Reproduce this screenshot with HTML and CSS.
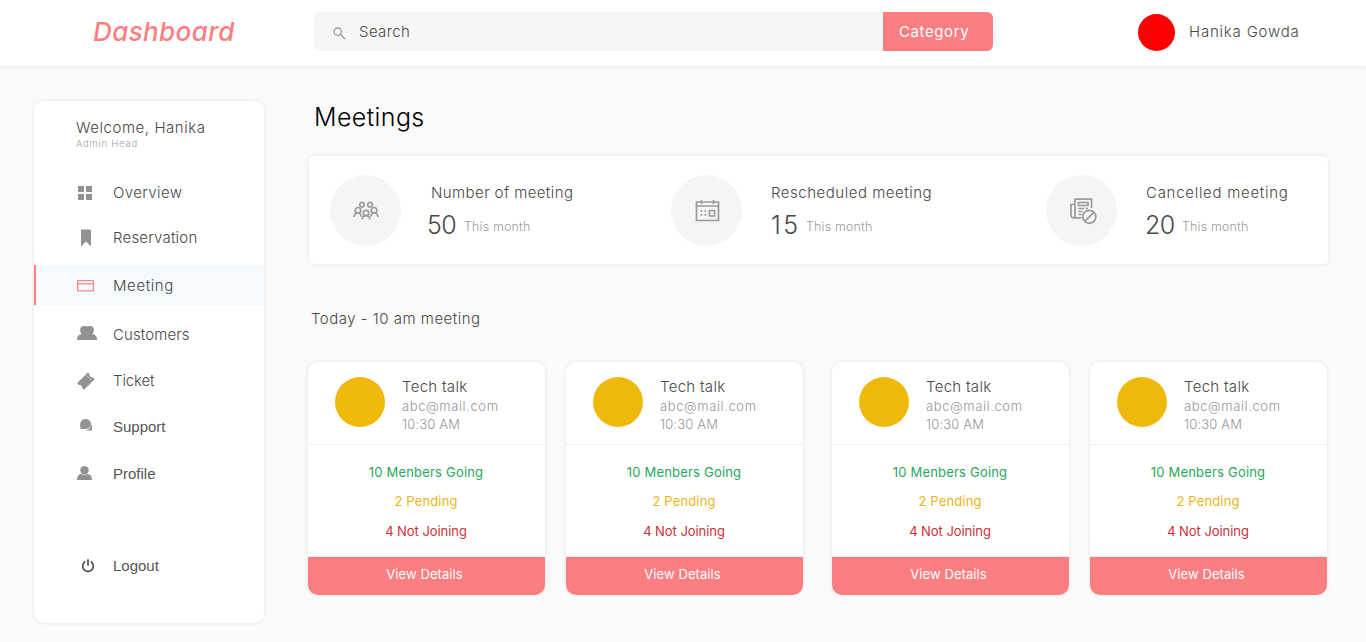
FILE: index.html
```html
<!DOCTYPE html>
<html lang="en">
<head>
<meta charset="utf-8">
<title>Dashboard</title>
<link rel="stylesheet" href="styles.css">
</head>
<body>
<header class="topbar">
  <div class="logo">Dashboard</div>
  <div class="search">
    <svg class="search-icon" width="13" height="13" viewBox="0 0 13 13"><circle cx="4.7" cy="4.7" r="3.7"/><path d="M7.5 7.5 12 12"/></svg>
    <span class="search-text">Search</span>
    <span class="category">Category</span>
  </div>
  <div class="user"><span class="user-pic"></span><span class="user-name">Hanika Gowda</span></div>
</header>
<div class="layout">
  <aside class="sidebar">
    <div class="welcome">Welcome, Hanika</div>
    <div class="role">Admin Head</div>
    <nav class="menu">
      <a class="item overview"><span class="icon"><svg width="16" height="16" viewBox="0 0 16 16"><path d="M1 1h6v6H1zM9 1h6v6H9zM1 9h6v6H1zM9 9h6v6H9z"/></svg></span><span>Overview</span></a>
      <a class="item reservation"><span class="icon"><svg width="18" height="18" viewBox="0 0 18 18"><path d="M4 .5h10v17l-5-5-5 5z"/></svg></span><span>Reservation</span></a>
      <a class="item meeting active"><span class="icon"><svg width="17" height="12" viewBox="0 0 17 12"><rect class="line" x=".6" y=".6" width="15.8" height="10.3" rx=".6"/><path class="line" d="M1 3.8h15"/></svg></span><span>Meeting</span></a>
      <a class="item customers"><span class="icon"><svg width="20" height="14" viewBox="0 0 20 14"><rect x="3.200" y="0" width="8.500" height="8.500" rx="3.800"/><rect x="8.300" y="0" width="8.500" height="8.500" rx="3.800"/><path d="M0 14c0-4 2-6 6-6h8c4 0 6 2 6 6z"/></svg></span><span>Customers</span></a>
      <a class="item ticket"><span class="icon"><svg width="18" height="18" viewBox="0 0 18 18"><path d="M0 11.2 10.9.6l1.700 1.700c-.5 1.700 1.200 3.500 3.200 3l2 2L7 17.800l-1.800-1.700c.5-1.800-1.400-3.600-3.300-3z"/><path class="perforation" d="m9.700 3.600 5.100 5"/></svg></span><span>Ticket</span></a>
      <a class="item support"><span class="icon"><svg width="13" height="12" viewBox="0 0 13 12"><ellipse cx="5.600" cy="5" rx="5.400" ry="5"/><path d="M.3 5v5h5z"/><path d="M11.400 5.500c.9 1.200.9 2.300.6 3.200v2.800H9c-1.300.2-2.500-.1-3.200-.6 3-.2 5.100-2 5.600-5.400z"/></svg></span><span>Support</span></a>
      <a class="item profile"><span class="icon"><svg width="15" height="14" viewBox="0 0 15 14"><circle cx="7.500" cy="4.200" r="4.200"/><path d="M0 14c0-4 1.700-5.800 4.500-6 2 1.400 4 1.400 6 0 2.800.2 4.500 2 4.500 6z"/></svg></span><span>Profile</span></a>
      <a class="item logout"><span class="icon"><svg width="14" height="14" viewBox="0 0 14 14"><path class="power" d="M4.300 2.500a5.300 5.300 0 1 0 5.400 0M7 .2v6.600"/></svg></span><span>Logout</span></a>
    </nav>
  </aside>
  <main class="content">
    <h1 class="title">Meetings</h1>
    <section class="stats">
      <div class="stat total">
        <div class="disc"><svg width="26" height="20" viewBox="0 0 26 20"><circle cx="9" cy="3.700" r="2.300"/><circle cx="17" cy="3.700" r="2.300"/><circle cx="5" cy="9.300" r="2.800"/><circle cx="21" cy="9.300" r="2.800"/><circle cx="13" cy="12" r="2.700"/><path d="M1.200 16c0-2.400 1.300-4 3.600-4s3.300 1.500 3.300 3.700M17.900 15.700c0-2.200 1.200-3.700 3.400-3.700s3.500 1.600 3.500 4M9.300 18.600c0-2.300 1.400-3.900 3.700-3.900s3.700 1.600 3.700 3.900"/></svg></div>
        <div class="stat-info"><div class="stat-label">Number of meeting</div><div class="stat-row"><span class="stat-value">50</span><span class="stat-note">This month</span></div></div>
      </div>
      <div class="stat moved">
        <div class="disc"><svg width="24" height="22" viewBox="0 0 24 22"><path d="M1.500 2h22v18.500h-22zM1.500 6h22M6.500 0v4M18.500 0v4M14.500 10.500h5v5.500h-5z"/><path class="dots" d="M5.500 10h1.800v1.800H5.500zM9.500 10h1.800v1.800H9.500zM5.500 14h1.800v1.800H5.500zM9.500 14h1.800v1.800H9.500z"/></svg></div>
        <div class="stat-info"><div class="stat-label">Rescheduled meeting</div><div class="stat-row"><span class="stat-value">15</span><span class="stat-note">This month</span></div></div>
      </div>
      <div class="stat cancelled">
        <div class="disc"><svg width="28" height="26" viewBox="0 0 28 26"><path d="M11.500 19.800H3.500C2 19.800 1 18.900 1 17.500V6.500h3.500M5 19.500V1.200h16.500V10M8.500 4.500h9.500v3H8.500zM8.500 10.500h6M8.500 13.500h4M8.500 16.500h3M16 10.500h2"/><circle cx="19.300" cy="18.800" r="6.500"/><path d="m14.800 23.300 9-9"/></svg></div>
        <div class="stat-info"><div class="stat-label">Cancelled meeting</div><div class="stat-row"><span class="stat-value">20</span><span class="stat-note">This month</span></div></div>
      </div>
    </section>
    <h2 class="subtitle">Today - 10 am meeting</h2>
    <section class="cards">
      <article class="card"><div class="card-head"><span class="avatar"></span><div><div class="name">Tech talk</div><div class="mail">abc@mail.com</div><div class="time">10:30 AM</div></div></div><div class="card-body"><div class="going">10 Menbers Going</div><div class="pending">2 Pending</div><div class="declined">4 Not Joining</div></div><div class="details">View Details</div></article>
      <article class="card"><div class="card-head"><span class="avatar"></span><div><div class="name">Tech talk</div><div class="mail">abc@mail.com</div><div class="time">10:30 AM</div></div></div><div class="card-body"><div class="going">10 Menbers Going</div><div class="pending">2 Pending</div><div class="declined">4 Not Joining</div></div><div class="details">View Details</div></article>
      <article class="card"><div class="card-head"><span class="avatar"></span><div><div class="name">Tech talk</div><div class="mail">abc@mail.com</div><div class="time">10:30 AM</div></div></div><div class="card-body"><div class="going">10 Menbers Going</div><div class="pending">2 Pending</div><div class="declined">4 Not Joining</div></div><div class="details">View Details</div></article>
      <article class="card"><div class="card-head"><span class="avatar"></span><div><div class="name">Tech talk</div><div class="mail">abc@mail.com</div><div class="time">10:30 AM</div></div></div><div class="card-body"><div class="going">10 Menbers Going</div><div class="pending">2 Pending</div><div class="declined">4 Not Joining</div></div><div class="details">View Details</div></article>
    </section>
  </main>
</div>
</body>
</html>
```
FILE: styles.css
```css
* { box-sizing: border-box; }
body { margin: 0; height: 642px; overflow: hidden; background: #fafafa; color: #484848; font: 300 15px/20px "Century Gothic", Inter, "Liberation Sans", sans-serif; white-space: nowrap; }
svg { display: block; flex: none; overflow: visible; }
.topbar { display: flex; align-items: center; height: 66px; padding-left: 93px; background: #fff; box-shadow: 0 1px 4px rgba(0,0,0,.08); }
.logo { width: 221px; margin-top: -3px; color: #fb7e81; font-size: 26px; font-weight: 500; font-style: italic; line-height: 32px; letter-spacing: .4px; }
.search { display: flex; align-items: center; width: 679px; height: 39px; margin-top: -3px; padding-left: 19px; background: #f6f6f6; border-radius: 6px; overflow: hidden; }
.search-icon { fill: none; stroke: #a0a0a0; stroke-width: 1.4; margin-top: 3px; }
.search-text { flex: 1; margin-left: 13px; letter-spacing: .4px; }
.category { width: 110px; height: 39px; padding-left: 16px; background: #fb7e81; color: #fff; line-height: 39px; font-weight: 400; letter-spacing: .6px; }
.user { display: flex; align-items: center; margin-left: 145px; margin-top: -1px; }
.user-pic { width: 37px; height: 37px; border-radius: 50%; background: #f00; }
.user-name { margin: -2px 0 0 14px; letter-spacing: .8px; }
.layout { display: flex; padding: 35px 0 0 34px; }
.sidebar { width: 230px; height: 522px; flex: none; padding-top: 17px; background: #fff; border-radius: 10px; box-shadow: 0 0 4px rgba(0,0,0,.09); }
.welcome { padding-left: 42px; letter-spacing: .55px; }
.role { padding-left: 42px; color: #a0a0a0; font-size: 9.5px; line-height: 12px; letter-spacing: .75px; }
.menu { padding-top: 23px; }
.item { display: flex; align-items: center; height: 40px; letter-spacing: .4px; }
.icon { width: 79px; padding-left: 43px; fill: #929292; }
.reservation { margin-top: 5px; letter-spacing: .2px; }
.meeting { margin-top: 7px; padding-top: 2px; letter-spacing: .6px; }
.active { background: #f5faff; border-left: 2px solid #fb7e81; }
.active .icon { width: 77px; padding-left: 41px; margin-top: -1px; }
.line { fill: none; stroke: #fb8589; stroke-width: 1.3; }
.customers { margin-top: 9px; padding-top: 2px; letter-spacing: .1px; }
.customers .icon { margin-top: -5px; }
.ticket { margin-top: 6px; padding-top: 2px; letter-spacing: -.15px; }
.perforation { stroke: #fff; stroke-width: .9; stroke-dasharray: 1.3 1; }
.support, .profile, .logout { color: #555; font-family: "Liberation Sans", sans-serif; font-weight: 400; letter-spacing: 0; }
.support { margin-top: 7px; }
.support .icon { padding-left: 46px; margin-top: -5px; }
.profile { margin-top: 7px; }
.profile .icon { margin-top: -2px; }
.logout { margin-top: 52px; }
.logout .icon { padding-left: 47px; }
.power { fill: none; stroke: #505050; stroke-width: 1.7; }
.content { width: 1020px; margin-left: 44px; }
.title { margin: 0; padding-left: 6px; color: #000; font-size: 25px; font-weight: 300; line-height: 32px; letter-spacing: .4px; }
.stats { display: flex; width: 1019px; height: 108px; margin: 23px 0 0 1px; padding: 19px 0 0 21px; background: #fff; border-radius: 5px; box-shadow: 0 0 4px rgba(0,0,0,.09); }
.stat { display: flex; }
.total { width: 341px; }
.moved { width: 375px; }
.disc { display: grid; place-items: center; flex: none; width: 71px; height: 71px; border-radius: 50%; background: #f5f5f5; }
.disc svg { fill: none; stroke: #9b9b9b; stroke-width: 1.7; }
.disc .dots { fill: #9b9b9b; stroke: none; }
.cancelled .disc { padding-left: 5px; }
.stat-info { padding: 8px 0 0 29px; }
.total .stat-info { padding-left: 26px; }
.total .stat-label { padding-left: 4px; letter-spacing: .42px; }
.moved .stat-label { letter-spacing: .52px; }
.cancelled .stat-label { letter-spacing: .72px; }
.stat-row { display: flex; margin-top: 6px; }
.stat-value { width: 37px; font-size: 25px; line-height: 32px; letter-spacing: -.5px; }
.moved .stat-value { width: 35px; letter-spacing: 2.5px; }
.cancelled .stat-value { margin-left: -1px; }
.stat-note { margin-top: 8px; color: #9b9b9b; font-size: 12.5px; line-height: 20px; letter-spacing: .15px; }
.subtitle { margin: 45px 0 0 3px; font-size: 15px; font-weight: 300; letter-spacing: .5px; }
.cards { display: flex; gap: 21px; margin-top: 33px; }
.card { width: 237px; height: 233px; flex: none; background: #fff; border-radius: 10px; box-shadow: 0 0 4px rgba(0,0,0,.09); overflow: hidden; }
.card:nth-child(3) { margin-left: 8px; }
.card-head { display: flex; height: 83px; padding: 15px 0 0 27px; border-bottom: 1px solid #ebf0f5; }
.avatar { width: 50px; height: 50px; margin-right: 17px; border-radius: 50%; background: #efb90c; }
.name { letter-spacing: .3px; }
.mail, .time { color: #969696; font-size: 13px; line-height: 18px; }
.mail { letter-spacing: .6px; }
.time { letter-spacing: .15px; }
.card-body { height: 112px; padding: 13px 1px 0 0; border-bottom: 1px solid #ebf0f5; text-align: center; font-size: 13px; font-weight: 400; line-height: 29px; }
.going { color: #27a85c; letter-spacing: .2px; }
.pending { color: #ebb517; letter-spacing: .15px; }
.declined { margin-top: 1px; color: #cb2f38; letter-spacing: -.05px; }
.details { height: 38px; padding-right: 4px; background: #fb7e81; color: #fff; text-align: center; font-size: 13px; font-weight: 400; line-height: 35px; letter-spacing: .08px; }
```
